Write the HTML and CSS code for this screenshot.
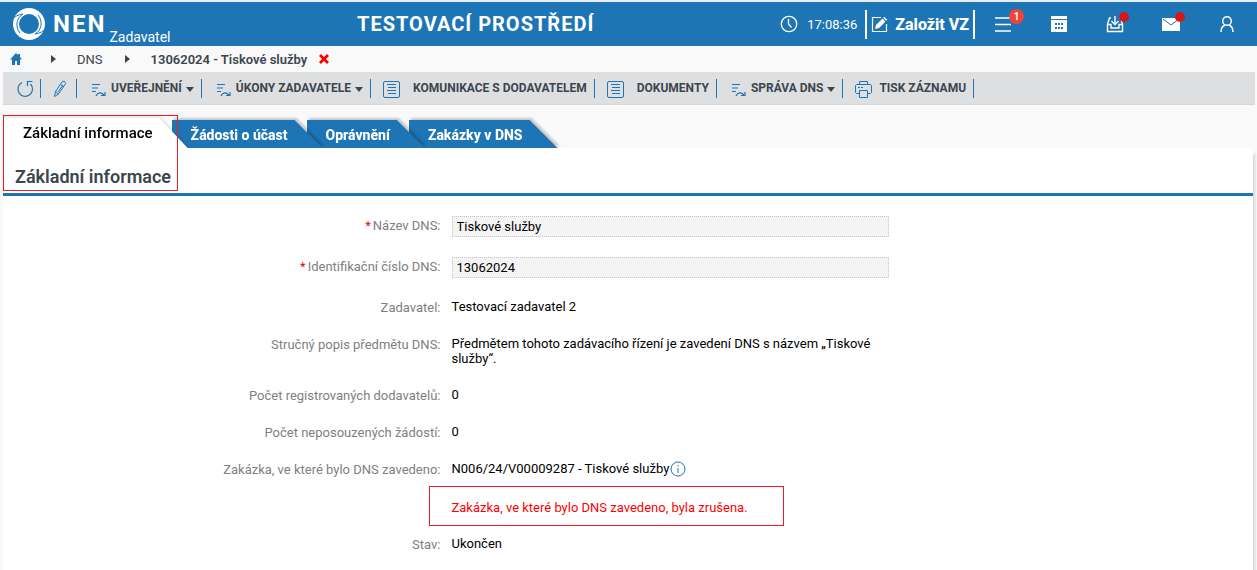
FILE: index.html
```html
<!DOCTYPE html>
<html lang="cs">
<head>
    <meta charset="UTF-8">
    <meta name="viewport" content="width=device-width, initial-scale=1.0">
    <title>NEN - 13062024 - Tiskové služby</title>
    <link rel="stylesheet" href="styles.css">
</head>
<body>
    <header class="header">
        <a class="brand" href="#">
            <svg class="brand-logo" width="34" height="34" viewBox="0 0 34 34">
                <path fill="#fff" fill-rule="evenodd" d="M17 1a16 16 0 1 1 0 32a16 16 0 1 1 0-32zM17 7a10 10 0 1 0 0 20a10 10 0 1 0 0-20z"/>
                <path fill="none" stroke="#1e75b5" d="M0 13C3 9 6 8 11 7C4 11 3 20 8 26M34 21C31 25 28 26 23 27C30 23 31 14 26 8"/>
            </svg>
            <span class="brand-name">NEN</span>
            <span class="brand-role">Zadavatel</span>
        </a>
        <div class="env">TESTOVACÍ PROSTŘEDÍ</div>
        <div class="clock">
            <svg width="18" height="18" viewBox="0 0 18 18" fill="none" stroke="#fff" stroke-width="1.300">
                <circle cx="9" cy="9" r="7.700"/>
                <path d="M8.500 4v5l3 3.500"/>
            </svg>
            <time>17:08:36</time>
        </div>
        <button type="button" class="create">
            <svg width="17" height="17" viewBox="0 0 17 17">
                <path fill="none" stroke="#fff" stroke-width="1.200" d="M10 1.500H1.500v14h14V8"/>
                <path fill="#fff" d="M4 13l1-4 6.500-6.500 3 3L8 12zM12.200 1.800l1-1 3 3-1 1z"/>
            </svg>
            Založit VZ
        </button>
        <nav class="header-nav">
            <button type="button" aria-label="Menu">
                <svg width="18" height="18" viewBox="0 0 18 18" stroke="#fff" stroke-width="1.600">
                    <path d="M1 3h16M1 9.500h16M1 16h16"/>
                </svg>
                <span class="badge">1</span>
            </button>
            <button type="button" aria-label="Kalendář">
                <svg width="18" height="18" viewBox="0 0 18 18">
                    <path fill="#fff" d="M1 1h16v3H1zM1 5h16v12H1z"/>
                    <path stroke="#1e75b5" stroke-width="2" stroke-dasharray="2 1" d="M5 9h8M5 13h8"/>
                </svg>
            </button>
            <button type="button" aria-label="Přijaté">
                <svg width="18" height="18" viewBox="0 0 18 18" fill="none" stroke="#fff" stroke-width="1.400">
                    <path d="M5 3H3.500L1.500 9v7.500h15V9l-2-6H13M1.500 9.500H5v3.500h8V9.500h3.500M9 1v8M5.500 6L9 9.500 12.500 6"/>
                </svg>
                <span class="dot"></span>
            </button>
            <button type="button" aria-label="Zprávy">
                <svg width="18" height="18" viewBox="0 0 18 18">
                    <path fill="#fff" d="M0 3h18v13H0z"/>
                    <path fill="none" stroke="#1e75b5" d="M1 4l8 6 8-6"/>
                </svg>
                <span class="dot"></span>
            </button>
            <button type="button" aria-label="Uživatel">
                <svg width="18" height="18" viewBox="0 0 18 18" fill="none" stroke="#fff" stroke-width="1.500">
                    <circle cx="9" cy="6" r="4.300"/>
                    <path d="M3 17c0-4 1.500-6 4-7M15 17c0-4-1.500-6-4-7"/>
                </svg>
            </button>
        </nav>
    </header>

    <nav class="breadcrumb">
        <a href="#" aria-label="Domů">
            <svg width="12" height="12" viewBox="0 0 12 12"><path fill="#1e75b5" d="M6 0l2 2V1h2v3l2 2.500h-2V12H7V8H5v4H2V6.500H0z"/></svg>
        </a>
        <span class="arrow"></span>
        <a href="#">DNS</a>
        <span class="arrow"></span>
        <strong>13062024 - Tiskové služby</strong>
        <button type="button" class="close" aria-label="Zavřít">
            <svg width="10" height="10" viewBox="0 0 10 10" stroke="#f00" stroke-width="2.800"><path d="M1 1l8 8M9 1l-8 8"/></svg>
        </button>
    </nav>

    <div class="toolbar">
        <button type="button" class="tool tool-refresh" aria-label="Obnovit">
            <svg width="18" height="18" viewBox="0 0 18 18" fill="none" stroke="#1e75b5" stroke-width="1.200">
                <path d="M6 2.500a7.300 7.300 0 1 0 8.500 1.500M11.500 6V1.500h5"/>
            </svg>
        </button>
        <button type="button" class="tool tool-edit" aria-label="Upravit">
            <svg width="14" height="18" viewBox="0 0 14 18" fill="none" stroke="#1e75b5">
                <path d="M1.500 16.500l1-5L9 2c1.500-2 4.500 0 3 2.500L5.500 14zM7.500 4.500l3 2M5 12l5-7M2.500 11.500l3 2.500"/>
            </svg>
        </button>
        <button type="button" class="tool">
            <svg width="16" height="16" viewBox="0 0 16 16" fill="none" stroke="#1e75b5" stroke-width="1.200">
                <path d="M1 2.500h8M1 6h6M1 9.500h4M5 14c2-4 5-4 8-1M14 10v3.500h-4"/>
            </svg>
            UVEŘEJNĚNÍ <span class="caret"></span>
        </button>
        <button type="button" class="tool">
            <svg width="16" height="16" viewBox="0 0 16 16" fill="none" stroke="#1e75b5" stroke-width="1.200">
                <path d="M1 2.500h8M1 6h6M1 9.500h4M5 14c2-4 5-4 8-1M14 10v3.500h-4"/>
            </svg>
            ÚKONY ZADAVATELE <span class="caret"></span>
        </button>
        <button type="button" class="tool tool-list">
            <svg width="17" height="17" viewBox="0 0 17 17" fill="none" stroke="#1e75b5">
                <rect x=".5" y=".5" width="16" height="16" rx="1.500"/>
                <path d="M4 3.500h9M5 6.500h8M4 9.500h9M5 12.500h8"/>
            </svg>
            KOMUNIKACE S DODAVATELEM
        </button>
        <button type="button" class="tool tool-list">
            <svg width="17" height="17" viewBox="0 0 17 17" fill="none" stroke="#1e75b5">
                <rect x=".5" y=".5" width="16" height="16" rx="1.500"/>
                <path d="M4 3.500h9M5 6.500h8M4 9.500h9M5 12.500h8"/>
            </svg>
            DOKUMENTY
        </button>
        <button type="button" class="tool">
            <svg width="16" height="16" viewBox="0 0 16 16" fill="none" stroke="#1e75b5" stroke-width="1.200">
                <path d="M1 2.500h8M1 6h6M1 9.500h4M5 14c2-4 5-4 8-1M14 10v3.500h-4"/>
            </svg>
            SPRÁVA DNS <span class="caret"></span>
        </button>
        <button type="button" class="tool tool-print">
            <svg width="17" height="17" viewBox="0 0 17 17" fill="none" stroke="#1e75b5">
                <path d="M4.500 3.500v-3h8v3M4.500 12.500h-3l-1-1v-7l1-1h14l1 1v7l-1 1h-3M4.500 9.500h8v7h-8zM3 6.500h2M6 6.500h2"/>
            </svg>
            TISK ZÁZNAMU
        </button>
    </div>

    <main class="content">
        <div class="tabs">
            <button type="button" class="tab tab-active">Základní informace</button>
            <button type="button" class="tab">Žádosti o účast</button>
            <button type="button" class="tab">Oprávnění</button>
            <button type="button" class="tab">Zakázky v DNS</button>
        </div>
        <section class="panel">
            <h1>Základní informace</h1>
            <form class="form">
                <div class="row">
                    <label for="nazev"><span class="required">*</span>Název DNS:</label>
                    <input type="text" id="nazev" value="Tiskové služby" readonly>
                </div>
                <div class="row">
                    <label for="cislo"><span class="required">*</span>Identifikační číslo DNS:</label>
                    <input type="text" id="cislo" value="13062024" readonly>
                </div>
                <div class="row">
                    <span class="label">Zadavatel:</span>
                    <span class="value">Testovací zadavatel 2</span>
                </div>
                <div class="row">
                    <span class="label">Stručný popis předmětu DNS:</span>
                    <span class="value">Předmětem tohoto zadávacího řízení je zavedení DNS s názvem „Tiskové služby“.</span>
                </div>
                <div class="row">
                    <span class="label">Počet registrovaných dodavatelů:</span>
                    <span class="value">0</span>
                </div>
                <div class="row">
                    <span class="label">Počet neposouzených žádostí:</span>
                    <span class="value">0</span>
                </div>
                <div class="row">
                    <span class="label">Zakázka, ve které bylo DNS zavedeno:</span>
                    <span class="value value-info">N006/24/V00009287 - Tiskové služby
                        <svg width="16" height="16" viewBox="0 0 16 16" fill="none" stroke="#1e75b5">
                            <circle cx="8" cy="8" r="7"/>
                            <path d="M8 4v1.500M8 7v5"/>
                        </svg>
                    </span>
                </div>
                <div class="row">
                    <span class="value notice">Zakázka, ve které bylo DNS zavedeno, byla zrušena.</span>
                </div>
                <div class="row">
                    <span class="label">Stav:</span>
                    <span class="value">Ukončen</span>
                </div>
            </form>
        </section>
        <div class="highlight"></div>
    </main>
</body>
</html>
```
FILE: styles.css
```css
* {
    box-sizing: border-box;
}
body {
    font-family: Roboto, "Liberation Sans", sans-serif;
    font-size: 13px;
    color: #000;
    background: #f9f9f9;
    margin: 0;
    min-height: 100vh;
    display: flex;
    flex-direction: column;
}
button {
    font-family: inherit;
    border: none;
    background: none;
    padding: 0;
    cursor: pointer;
}
a {
    color: inherit;
    text-decoration: none;
}
svg {
    display: block;
    flex: none;
}

/* header */
.header {
    display: flex;
    align-items: center;
    height: 46px;
    border-top: 2px solid #e8eef2;
    padding-right: 2px;
    background: #1e75b5;
    color: #fff;
}
.brand {
    display: flex;
    align-items: center;
    width: 357px;
    height: 44px;
    padding-left: 12px;
}
.brand-name {
    margin-left: 7px;
    margin-right: 3px;
    font-size: 24px;
    font-weight: 700;
    letter-spacing: 2px;
}
.brand-role {
    align-self: flex-end;
    font-size: 14px;
    line-height: 18px;
}
.env {
    font-size: 20px;
    font-weight: 700;
    letter-spacing: 1px;
}
.clock {
    display: flex;
    align-items: center;
    gap: 9px;
    margin-left: auto;
    margin-right: 8px;
}
.create {
    display: flex;
    align-items: center;
    gap: 7px;
    height: 29px;
    padding: 0 4px;
    border-left: 2px solid #fff;
    border-right: 2px solid #fff;
    color: #fff;
    font-size: 16px;
    font-weight: 800;
}
.header-nav {
    display: flex;
}
.header-nav button {
    position: relative;
    display: flex;
    justify-content: center;
    width: 56px;
}
.badge {
    position: absolute;
    top: -6px;
    left: 34px;
    width: 15px;
    height: 15px;
    border-radius: 50%;
    background: #f44336;
    color: #fff;
    font-size: 10px;
    font-weight: 700;
    line-height: 15px;
}
.dot {
    position: absolute;
    top: -3px;
    left: 32px;
    width: 10px;
    height: 10px;
    border-radius: 50%;
    background: #d81518;
}

/* breadcrumb */
.breadcrumb {
    display: flex;
    align-items: center;
    height: 26px;
    padding-left: 10px;
    color: #3c464e;
}
.breadcrumb strong {
    font-weight: 600;
}
.arrow {
    margin: 0 21px 0 22px;
    border: 4px solid transparent;
    border-left: 5px solid #3c464e;
    border-right: 0;
}
.arrow:first-of-type {
    margin-left: 29px;
}
.close {
    margin-left: 12px;
}

/* toolbar */
.toolbar {
    display: flex;
    align-items: center;
    height: 33px;
    margin: 0 2px 0 3px;
    background: #dedfe1;
    border-bottom: 1px solid #d6d6d6;
}
.tool {
    display: flex;
    align-items: center;
    height: 19px;
    padding: 0 7px 0 14px;
    border-right: 1px solid #1e75b5;
    color: #3c464e;
    font-size: 12px;
    font-weight: 700;
}
.tool svg {
    margin: 3px 4px 0 0;
}
.tool-refresh {
    padding: 0 6px 0 13px;
}
.tool-edit {
    padding: 0 9px 0 12px;
}
.tool-refresh svg,
.tool-edit svg {
    margin: 2px 0 0;
}
.tool-list {
    padding-left: 12px;
}
.tool-list svg {
    margin-right: 13px;
}
.tool-print {
    padding-left: 12px;
}
.tool-print svg {
    margin-right: 7px;
}
.caret {
    margin: 3px 0 0 4px;
    border: 4px solid transparent;
    border-top: 5px solid #3c464e;
    border-bottom: 0;
}

/* tabs */
.content {
    position: relative;
    flex: 1;
    display: flex;
    flex-direction: column;
    padding: 13px 4px 0 3px;
}
.tabs {
    display: flex;
    align-items: flex-end;
}
.tab {
    position: relative;
    height: 28px;
    margin-left: -16px;
    padding: 2px 35px 0 19px;
    color: #fff;
    font-size: 14px;
    font-weight: 800;
    filter: drop-shadow(2px -2px 1px rgba(0, 0, 0, 0.2));
}
.tab::before {
    content: "";
    position: absolute;
    inset: 0;
    z-index: -1;
    background: #1e75b5;
    clip-path: polygon(0 0, calc(100% - 28px) 0, 100% 100%, 0 100%);
}
.tab:nth-child(1) {
    z-index: 4;
}
.tab:nth-child(2) {
    z-index: 3;
}
.tab:nth-child(3) {
    z-index: 2;
}
.tab:nth-child(4) {
    z-index: 1;
}
.tab-active {
    height: 30px;
    margin-left: 0;
    padding: 0 35px 0 20px;
    color: #000;
    font-size: 15px;
    font-weight: 500;
    filter: drop-shadow(1px -1px 1px rgba(0, 0, 0, 0.1));
}
.tab-active::before {
    background: #fff;
}
.highlight {
    position: absolute;
    top: 10px;
    left: 3px;
    z-index: 6;
    width: 175px;
    height: 76px;
    border: 1px solid #ed1c24;
}

/* panel */
.panel {
    position: relative;
    z-index: 5;
    flex: 1;
    background: #fff;
    box-shadow: 2px 6px 3px rgba(0, 0, 0, 0.15);
}
.panel h1 {
    margin: 0;
    padding: 17px 12px 5px;
    border-bottom: 3px solid #1e75b5;
    color: #3c464e;
    font-size: 18px;
    font-weight: 600;
    line-height: 23px;
}
.form {
    display: flex;
    flex-direction: column;
    gap: 20px;
    padding: 20px 0;
}
.row {
    display: grid;
    grid-template-columns: 35% 35%;
    column-gap: 11px;
    line-height: 15px;
}
.row label,
.label {
    padding-top: 2px;
    color: #808080;
    text-align: right;
}
.required {
    margin-right: 2px;
    color: #e30613;
}
.row input {
    width: 100%;
    height: 21px;
    padding: 0 4px;
    border: 1px dotted #c4c4c4;
    background: #f4f4f4;
    color: #000;
    font-family: inherit;
    font-size: 13px;
}
.value {
    padding-top: 1px;
}
.value-info {
    display: flex;
    align-items: center;
    gap: 1px;
    height: 17px;
    padding-top: 0;
}
.notice {
    position: relative;
    grid-column: 2;
    justify-self: start;
    padding: 3px 0 0;
    color: #f00;
}
.notice::after {
    content: "";
    position: absolute;
    inset: -11px -36px -11px -23px;
    border: 1px solid #ed1c24;
}
```
